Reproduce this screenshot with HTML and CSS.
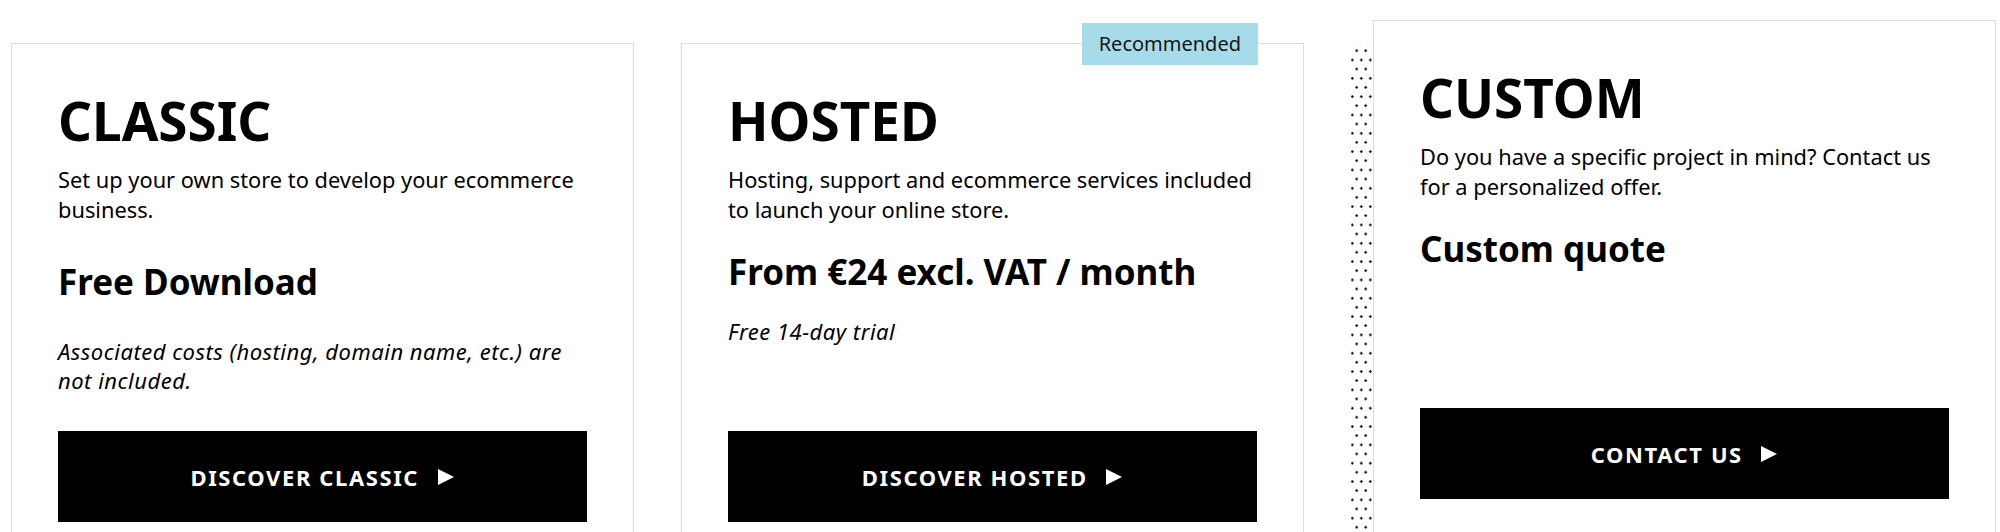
FILE: index.html
```html
<!DOCTYPE html>
<html lang="en">
<head>
<meta charset="utf-8">
<title>Plans</title>
<link rel="stylesheet" href="styles.css">
</head>
<body>
<main class="plans">
  <div class="plan-col">
    <article class="plan">
      <div class="plan__body">
        <h2 class="plan__title">CLASSIC</h2>
        <p class="plan__desc">Set up your own store to develop your ecommerce business.</p>
        <p class="plan__price plan__price--spaced">Free Download</p>
        <p class="plan__note">Associated costs (hosting, domain name, etc.) are not included.</p>
      </div>
      <a class="plan__btn" href="#"><span>DISCOVER CLASSIC</span><svg class="plan__arrow" viewBox="0 0 18 16" width="18" height="16" aria-hidden="true"><path d="M1 0L17 8L1 16Z"/></svg></a>
    </article>
  </div>
  <div class="plan-col">
    <article class="plan">
      <span class="plan__badge">Recommended</span>
      <div class="plan__body">
        <h2 class="plan__title">HOSTED</h2>
        <p class="plan__desc">Hosting, support and ecommerce services included to launch your online store.</p>
        <p class="plan__price">From €24 excl. VAT / month</p>
        <p class="plan__note">Free 14-day trial</p>
      </div>
      <a class="plan__btn" href="#"><span>DISCOVER HOSTED</span><svg class="plan__arrow" viewBox="0 0 18 16" width="18" height="16" aria-hidden="true"><path d="M1 0L17 8L1 16Z"/></svg></a>
    </article>
  </div>
  <div class="plan-col plan-col--dotted">
    <article class="plan plan--raised">
      <div class="plan__body">
        <h2 class="plan__title">CUSTOM</h2>
        <p class="plan__desc">Do you have a specific project in mind? Contact us for a personalized offer.</p>
        <p class="plan__price">Custom quote</p>
      </div>
      <a class="plan__btn" href="#"><span>CONTACT US</span><svg class="plan__arrow" viewBox="0 0 18 16" width="18" height="16" aria-hidden="true"><path d="M1 0L17 8L1 16Z"/></svg></a>
    </article>
  </div>
</main>
</body>
</html>
```

FILE: styles.css
```css
* {
  box-sizing: border-box;
}

html,
body {
  margin: 0;
  background: #ffffff;
}

body {
  font-family: "Noto Sans", "Open Sans", sans-serif;
  color: #000000;
}

.plans {
  display: flex;
  align-items: stretch;
  gap: 47px;
  padding: 43px 0 0 11px;
}

.plan-col {
  flex: 0 0 623px;
  display: flex;
}

.plan-col--dotted {
  background-image:
    radial-gradient(circle, #000000 0.9px, rgba(0, 0, 0, 0) 1.5px),
    radial-gradient(circle, #000000 0.9px, rgba(0, 0, 0, 0) 1.5px);
  background-size: 9px 18.33px;
  background-position: 1.2px -1.47px, -3.2px 7.83px;
}

.plan {
  position: relative;
  flex: 1;
  display: flex;
  flex-direction: column;
  background: #ffffff;
  border: 1px solid #dcdcdc;
  padding: 45px 46px 46px;
}

.plan--raised {
  transform: translate(22px, -23px);
}

.plan__body {
  flex: 1;
}

.plan__badge {
  position: absolute;
  top: -21px;
  right: 45px;
  height: 42px;
  padding: 0 17px;
  background: #a6dce9;
  color: #161616;
  font-size: 20px;
  line-height: 42px;
}

.plan__title {
  margin: 0;
  font-size: 53px;
  line-height: 63.6px;
  font-weight: 700;
}

.plan__desc {
  margin: 12px 0 0;
  font-size: 21.8px;
  line-height: 30px;
}

.plan__price {
  margin: 27px 0 0;
  font-size: 35px;
  line-height: 40.8px;
  font-weight: 700;
}

.plan__price--spaced {
  padding: 10px 0;
}

.plan__note {
  margin: 25px 0 0;
  font-size: 22px;
  line-height: 29px;
  font-style: italic;
  letter-spacing: 0.5px;
}

.plan__btn {
  margin-top: 36px;
  height: 91px;
  display: flex;
  align-items: center;
  justify-content: center;
  gap: 17.5px;
  background: #000000;
  color: #ffffff;
  text-decoration: none;
  font-size: 22px;
  font-weight: 700;
  letter-spacing: 1.6px;
}

.plan__arrow {
  display: block;
  fill: #ffffff;
}
```
